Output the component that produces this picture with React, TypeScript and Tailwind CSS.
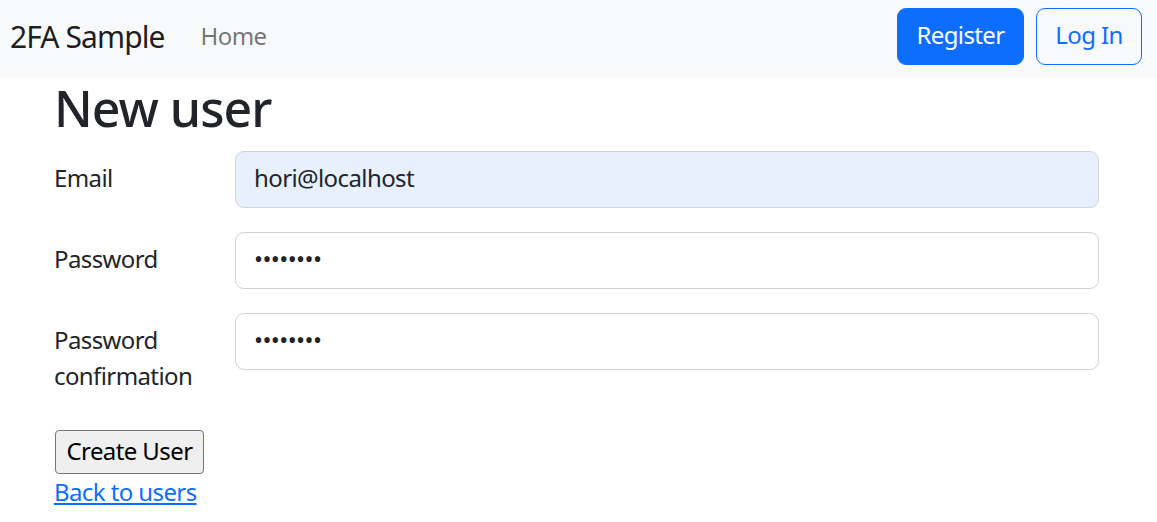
import React from 'react'

export default function App() {
  return (
    <div className="min-h-screen bg-white font-['Noto_Sans',sans-serif] text-[#212529]">
      {/* Navbar */}
      <nav className="h-[78px] bg-[#f8f9fa] pl-[10px] pr-[15px] pt-[8px]">
        <div className="flex h-[57px] items-center">
          <a className="text-[30px] leading-[45px] tracking-[-0.9px] text-[rgba(0,0,0,0.9)]">2FA Sample</a>
          <a className="ml-[36px] pb-[2px] text-[24px] leading-[36px] tracking-[-0.6px] text-[rgba(0,0,0,0.55)]">Home</a>
          <div className="ml-auto flex gap-[12px]">
            <button className="h-[57px] w-[127px] rounded-[9px] border border-[#0d6efd] bg-[#0d6efd] pb-[3px] text-[24px] leading-[36px] tracking-[-0.6px] text-white">
              Register
            </button>
            <button className="h-[57px] w-[106px] rounded-[9px] border border-[#0d6efd] bg-transparent pb-[3px] text-[24px] leading-[36px] tracking-[-0.6px] text-[#0d6efd]">
              Log In
            </button>
          </div>
        </div>
      </nav>

      {/* Content */}
      <div className="ml-[54px] w-[1045px]">
        <h1 className="mb-[13px] text-[50px] font-medium leading-[60px] tracking-[-1px]">New user</h1>

        <form className="text-[24px] leading-[36px] tracking-[-0.6px]">
          <div className="mb-[24px] flex">
            <label className="w-[181px] shrink-0 pt-[8.5px] pb-[12.5px]">Email</label>
            <input
              type="email"
              defaultValue="hori@localhost"
              className="h-[57px] flex-1 rounded-[9px] border border-[#ced4da] bg-[#e8f0fe] px-[18px] pb-[4px] text-[24px] tracking-[-0.6px] text-[#212529] outline-none"
            />
          </div>
          <div className="mb-[24px] flex">
            <label className="w-[181px] shrink-0 pt-[8.5px] pb-[12.5px]">Password</label>
            <input
              type="password"
              defaultValue="password"
              className="h-[57px] flex-1 rounded-[9px] border border-[#ced4da] bg-white px-[18px] pb-[4px] text-[24px] text-[#212529] outline-none"
            />
          </div>
          <div className="mb-[24px] flex">
            <label className="w-[181px] shrink-0 pt-[8.5px] pb-[12.5px]">
              Password
              <br />
              confirmation
            </label>
            <input
              type="password"
              defaultValue="password"
              className="h-[57px] flex-1 rounded-[9px] border border-[#ced4da] bg-white px-[18px] pb-[4px] text-[24px] text-[#212529] outline-none"
            />
          </div>

          <button
            type="button"
            className="ml-[1px] block h-[44px] w-[149px] rounded-[4px] border border-[#767676] bg-[#efefef] pb-[3px] text-[24px] leading-[36px] tracking-[-0.6px] text-black"
          >
            Create User
          </button>
        </form>
        <a href="#" className="text-[24px] leading-[36px] tracking-[-0.6px] text-[#0d6efd] underline">
          Back to users
        </a>
      </div>
    </div>
  )
}
